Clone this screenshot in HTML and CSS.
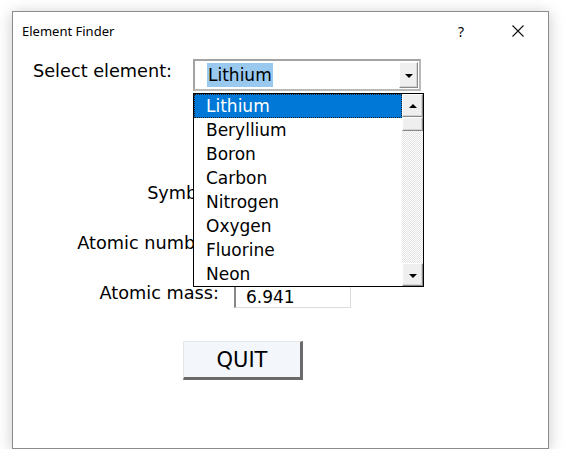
FILE: index.html
```html
<!DOCTYPE html>
<html>
<head>
<meta charset="utf-8">
<link rel="stylesheet" href="styles.css">
</head>
<body>
<div class="window">
  <div class="titlebar">
    <span class="title">Element Finder</span>
    <span class="help">?</span>
    <svg class="close" width="12" height="12" viewBox="0 0 12 12"><path d="M0.5 0.5L11.5 11.5M11.5 0.5L0.5 11.5" stroke="#111" stroke-width="1.1" fill="none"/></svg>
  </div>
  <div class="content">
    <div class="select-row">
      <span class="select-label">Select element:</span>
      <div class="combo">
        <span class="combo-text"><span class="hl">Lithium</span></span>
        <span class="btn3d combo-btn"><span class="tri-down"></span></span>
      </div>
    </div>
    <div class="fields">
      <span class="flabel">Symbol:</span><span class="field"></span>
      <span class="flabel">Atomic number:</span><span class="field"></span>
      <span class="flabel">Atomic mass:</span><span class="field">6.941</span>
    </div>
    <div class="btn-row">
      <button class="quit">QUIT</button>
    </div>
  </div>
  <div class="dropdown">
    <ul class="items">
      <li class="sel">Lithium</li>
      <li>Beryllium</li>
      <li>Boron</li>
      <li>Carbon</li>
      <li>Nitrogen</li>
      <li>Oxygen</li>
      <li>Fluorine</li>
      <li>Neon</li>
    </ul>
    <div class="scrollbar">
      <span class="btn3d sb-btn"><span class="tri-up"></span></span>
      <span class="btn3d thumb"></span>
      <span class="track"></span>
      <span class="btn3d sb-btn"><span class="tri-down"></span></span>
    </div>
  </div>
</div>
</body>
</html>
```
FILE: styles.css
```css
html, body {
  margin: 0;
  padding: 0;
  background: #ffffff;
}
body {
  padding: 11px 0 0 12px;
  font-family: "DejaVu Sans", sans-serif;
}
.window {
  position: relative;
  box-sizing: border-box;
  width: 537px;
  height: 438px;
  border: 1px solid #8c8c8c;
  background: #ffffff;
  box-shadow: 0 2px 14px rgba(0,0,0,0.22);
}
.titlebar {
  display: flex;
  align-items: center;
  height: 38px;
  padding-left: 9px;
  font-family: "Noto Sans", sans-serif;
  font-size: 13px;
  color: #000;
}
.title {
  flex: 1;
}
.help {
  width: 12px;
  margin-right: 42px;
  font-size: 14px;
}
.close {
  margin-right: 24px;
}
.content {
  font-family: "DejaVu Sans", sans-serif;
  font-size: 17.7px;
  color: #000;
}
.select-row {
  display: flex;
  margin-top: 9px;
  padding-left: 20px;
}
.select-label {
  width: 160px;
  padding-top: 2px;
}
.combo {
  box-sizing: border-box;
  display: flex;
  width: 228px;
  height: 32px;
  border: 2px solid;
  border-color: #a3a3a3 #b9b9b9 #b9b9b9 #a3a3a3;
  padding: 1px 0 1px 0;
  font-size: 17px;
}
.combo-text {
  flex: 1;
  padding-left: 12px;
  display: flex;
  align-items: center;
}
.hl {
  background: #99c9ef;
  line-height: 24px;
  padding: 0 1px;
}
.btn3d {
  box-sizing: border-box;
  display: flex;
  align-items: center;
  justify-content: center;
  background: #efefef;
  border: 1px solid;
  border-color: #ffffff #8a8a8a #8a8a8a #ffffff;
  box-shadow: inset -1px -1px 0 #d4d4d4;
}
.combo-btn {
  width: 19px;
  margin-right: 1px;
}
.tri-down {
  width: 0;
  height: 0;
  border-left: 4px solid transparent;
  border-right: 4px solid transparent;
  border-top: 4px solid #000;
  margin-top: 2px;
}
.tri-up {
  width: 0;
  height: 0;
  border-left: 4px solid transparent;
  border-right: 4px solid transparent;
  border-bottom: 4px solid #000;
}
.fields {
  display: grid;
  grid-template-columns: 206px 117px;
  column-gap: 15px;
  row-gap: 27px;
  margin-top: 94px;
  align-items: center;
}
.flabel {
  text-align: right;
  margin-top: -7px;
}
.field {
  box-sizing: border-box;
  height: 23px;
  border: 1px solid #dcdcdc;
  border-left: 2px solid #888;
  border-top: 1px solid #bbb;
  padding-left: 10px;
  line-height: 22px;
  font-size: 17px;
}
.btn-row {
  margin-top: 33px;
  padding-left: 170px;
}
.quit {
  box-sizing: border-box;
  width: 120px;
  height: 39px;
  background: #f3f6fb;
  border: 1px solid;
  border-color: #e6e6e6 #6a6a6a #6a6a6a #e6e6e6;
  border-right-width: 3px;
  border-bottom-width: 3px;
  font-family: "DejaVu Sans", sans-serif;
  font-size: 21px;
  color: #000;
  padding: 0;
}
.dropdown {
  position: absolute;
  left: 180px;
  top: 81px;
  box-sizing: border-box;
  width: 231px;
  height: 194px;
  border: 1px solid #000;
  background: #fff;
  display: flex;
  font-family: "DejaVu Sans", sans-serif;
  font-size: 17px;
}
.items {
  flex: 1;
  list-style: none;
  margin: 0;
  padding: 0;
}
.items li {
  box-sizing: border-box;
  height: 24px;
  line-height: 24px;
  padding-left: 12px;
  color: #000;
}
.items li.sel {
  background: #0078d7;
  color: #fff;
  outline: 1px dotted #222;
  outline-offset: -1px;
}
.scrollbar {
  width: 21px;
  display: flex;
  flex-direction: column;
}
.sb-btn {
  height: 23px;
}
.thumb {
  height: 14px;
}
.track {
  flex: 1;
  background-color: #f2f2f2;
  background-image: repeating-conic-gradient(#ffffff 0 25%, #e3e3e3 0 50%);
  background-size: 2px 2px;
}
```
